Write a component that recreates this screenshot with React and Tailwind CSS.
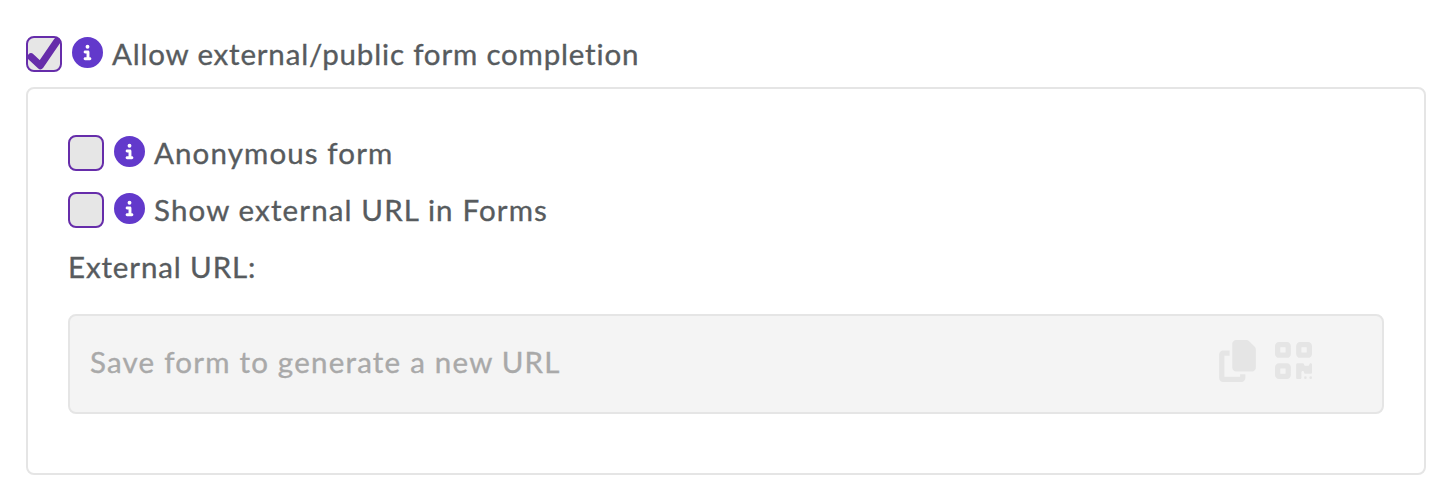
import { FaCircleInfo, FaCopy, FaQrcode } from "react-icons/fa6";

function CheckBox({ checked = false }) {
  return (
    <span
      role="checkbox"
      aria-checked={checked}
      className="relative block size-9 shrink-0 rounded-lg border-2 border-[#662daa] bg-[#e6e6e6]"
    >
      {checked && (
        <svg viewBox="0 0 36 36" className="absolute -top-0.5 -left-0.5 size-9" fill="none">
          <path
            d="M5 20.9 14.4 29.6 30.8 5.4"
            stroke="#662daa"
            strokeWidth="7.2"
            strokeLinecap="round"
            strokeLinejoin="round"
          />
        </svg>
      )}
    </span>
  );
}

function Option({ checked, children }) {
  return (
    <div className="flex h-9 items-start">
      <CheckBox checked={checked} />
      <FaCircleInfo className="mt-px ml-2.5 size-[31px] shrink-0 text-[#6239cb]" />
      {children}
    </div>
  );
}

export default function App() {
  return (
    <main className="h-[490px] bg-white pt-9 pr-2 pl-[26px] font-[Lato,sans-serif] text-[29.5px] leading-9 whitespace-nowrap text-[#575b5e] [-webkit-text-stroke:0.35px]">
      <Option checked>
        <span className="ml-[9px] tracking-[0.82px]">Allow external/public form completion</span>
      </Option>
      <section className="mt-[15px] h-[388px] rounded-lg border-2 border-[#e5e5e5] px-10 pt-[46px]">
        <div className="flex flex-col gap-[21px]">
          <Option>
            <span className="ml-[9px] tracking-[1.12px]">Anonymous form</span>
          </Option>
          <Option>
            <span className="ml-[9px] tracking-[1.14px]">Show external URL in Forms</span>
          </Option>
          <div className="h-9 tracking-[0.88px]">External URL:</div>
        </div>
        <div className="mt-[29px] flex h-[100px] items-center rounded-lg border-2 border-[#e5e5e5] bg-[#f4f4f4] pr-[70px] pl-5 text-[#a9a9a9]">
          <span className="-mt-1 grow tracking-[1.22px]">Save form to generate a new URL</span>
          <FaCopy className="mt-[-6px] h-[42px] w-[37px] text-[#e5e5e5]" />
          <FaQrcode className="mt-[-7px] ml-[19px] h-[43px] w-[37px] text-[#e5e5e5]" />
        </div>
      </section>
    </main>
  );
}
